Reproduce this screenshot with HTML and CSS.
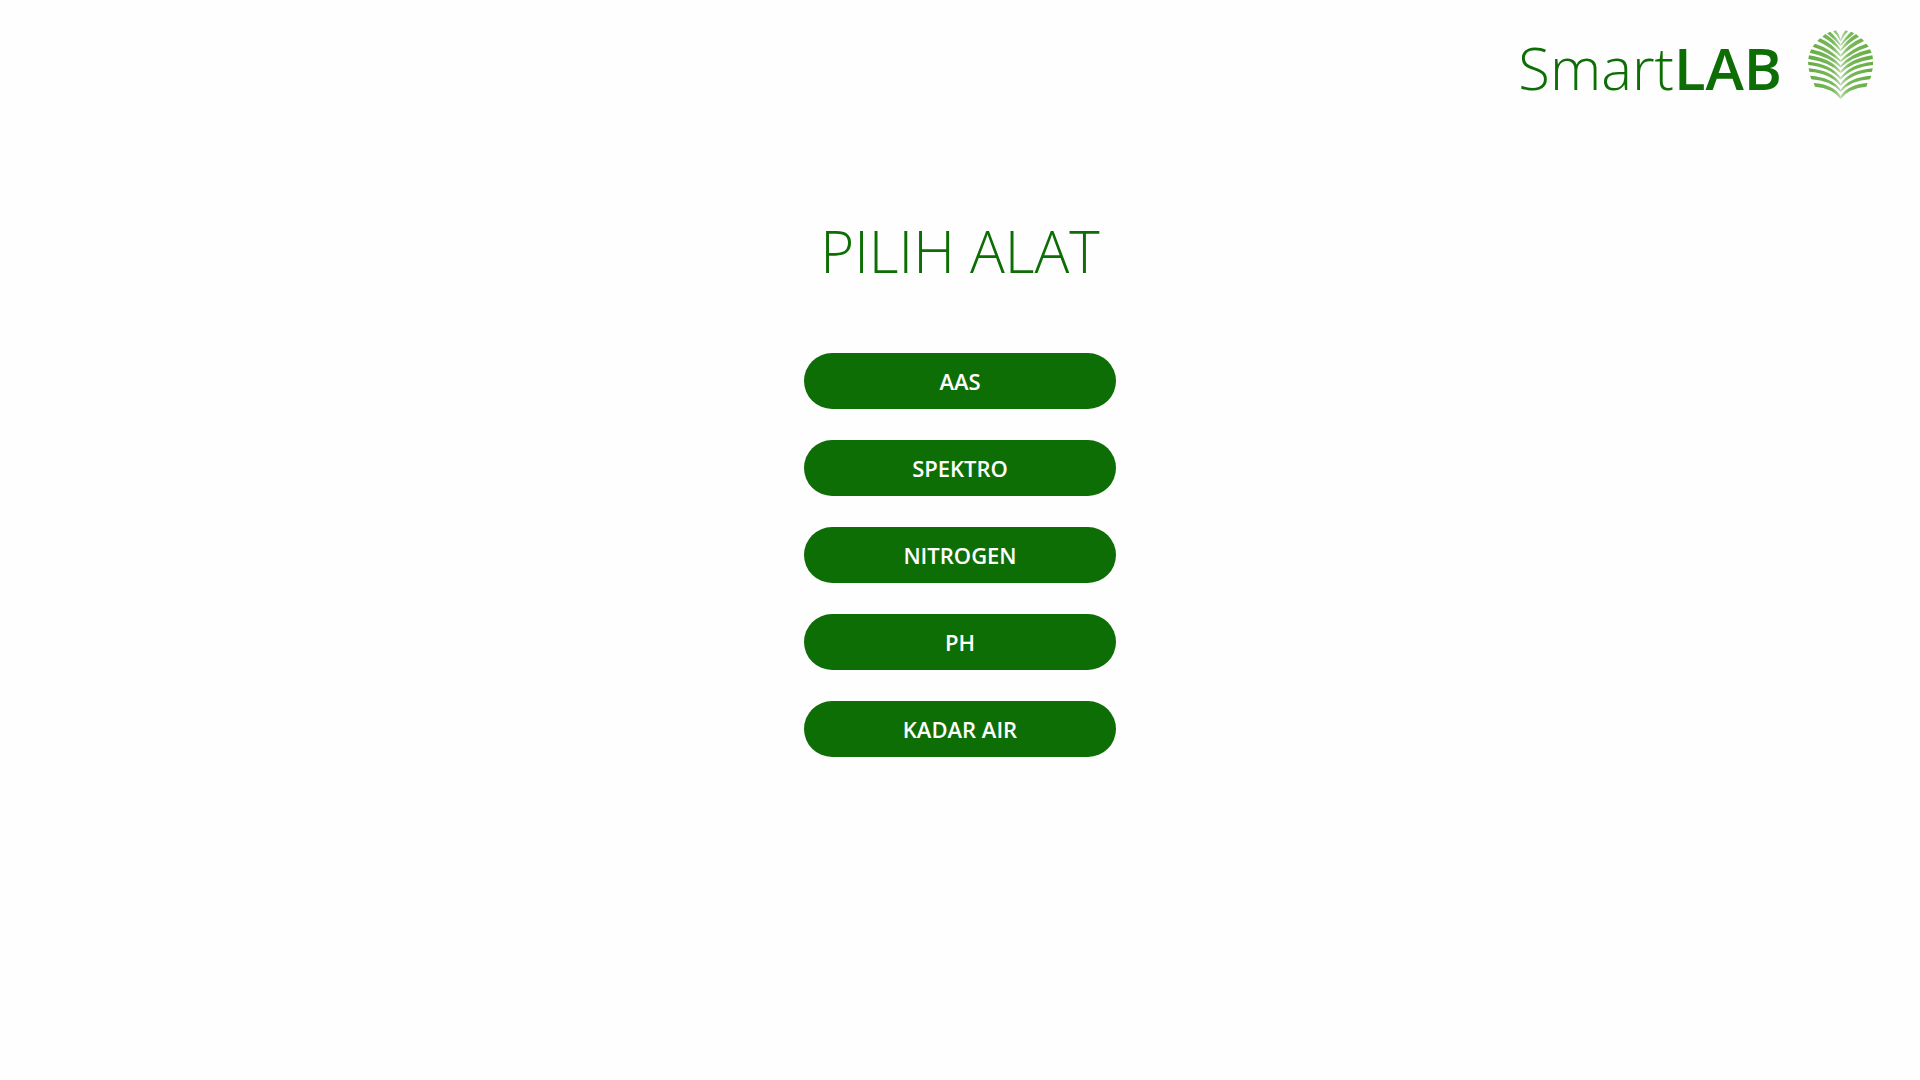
FILE: index.html
```
<!DOCTYPE html>
<html lang="id">
<head>
<meta charset="utf-8">
<meta name="viewport" content="width=device-width, initial-scale=1">
<title>SmartLAB</title>
<link rel="stylesheet" href="styles.css">
</head>
<body>
<header class="header">
  <div class="brand">Smart<strong class="brand-strong">LAB</strong></div>
  <svg class="logo" viewBox="54 45 195 207" aria-hidden="true">
    <defs>
      <linearGradient id="frond" gradientUnits="userSpaceOnUse" x1="54" y1="0" x2="152" y2="0">
        <stop offset="0" stop-color="#65ad42"/>
        <stop offset="0.75" stop-color="#78b85a"/>
        <stop offset="1" stop-color="#b9dba8"/>
      </linearGradient>
      <g id="half" fill="url(#frond)">
        <path d="M71 204Q130 208 152 243V252Q127 219 75 215Z"/>
        <path d="M60 182Q126 186 152 224V231Q122 196 64 193Z"/>
        <path d="M56 160Q126 166 152 206V213Q122 175 58 170Z"/>
        <path d="M54 140Q124 147 152 187V194Q120 157 55 150Z"/>
        <path d="M57 121Q124 131 152 168V175Q120 141 55 132Z"/>
        <path d="M64 103Q122 115 152 151V158Q118 125 59 113Z"/>
        <path d="M75 86Q122 101 152 135V142Q118 111 68 95Z"/>
        <path d="M90 70Q127 85 152 119V126Q122 96 82 78Z"/>
        <path d="M106 57Q134 74 152 103V109Q128 82 97 65Z"/>
        <path d="M121 50Q141 68 152 88V94Q134 74 111 55Z"/>
        <path d="M138 46Q149 60 152 74V80Q144 64 130 49Z"/>
      </g>
    </defs>
    <use href="#half"/>
    <use href="#half" transform="translate(304 0) scale(-1 1)"/>
  </svg>
</header>
<main class="main">
  <h1 class="title">PILIH ALAT</h1>
  <div class="menu">
    <button class="tool" type="button">AAS</button>
    <button class="tool" type="button">SPEKTRO</button>
    <button class="tool" type="button">NITROGEN</button>
    <button class="tool" type="button">PH</button>
    <button class="tool" type="button">KADAR AIR</button>
  </div>
</main>
</body>
</html>
```
FILE: styles.css
```
* {
  box-sizing: border-box;
}

body {
  margin: 0;
  background: #fefefe;
  color: #0e6e06;
  font-family: "Segoe UI", "Open Sans", "Noto Sans", sans-serif;
}

.header {
  display: flex;
  justify-content: flex-end;
  align-items: center;
  gap: 26px;
  padding: 20px 47px 0;
}

.brand {
  padding-top: 8px;
  font-size: 58px;
  font-weight: 330;
  line-height: 80px;
}

.brand-strong {
  font-weight: 600;
}

.logo {
  width: 65px;
  height: 69px;
}

.main {
  display: flex;
  flex-direction: column;
  align-items: center;
  gap: 62px;
  padding: 103px 24px 48px;
}

.title {
  margin: 0;
  font-size: 58px;
  font-weight: 330;
  line-height: 80px;
}

.menu {
  display: flex;
  flex-direction: column;
  gap: 31px;
  width: 312px;
  max-width: 100%;
}

.tool {
  height: 56px;
  padding: 0 24px;
  border: 0;
  border-radius: 28px;
  background: #0e6e06;
  color: #fff;
  font-family: inherit;
  font-size: 22px;
  font-weight: 600;
  line-height: 28px;
  cursor: pointer;
}
```
